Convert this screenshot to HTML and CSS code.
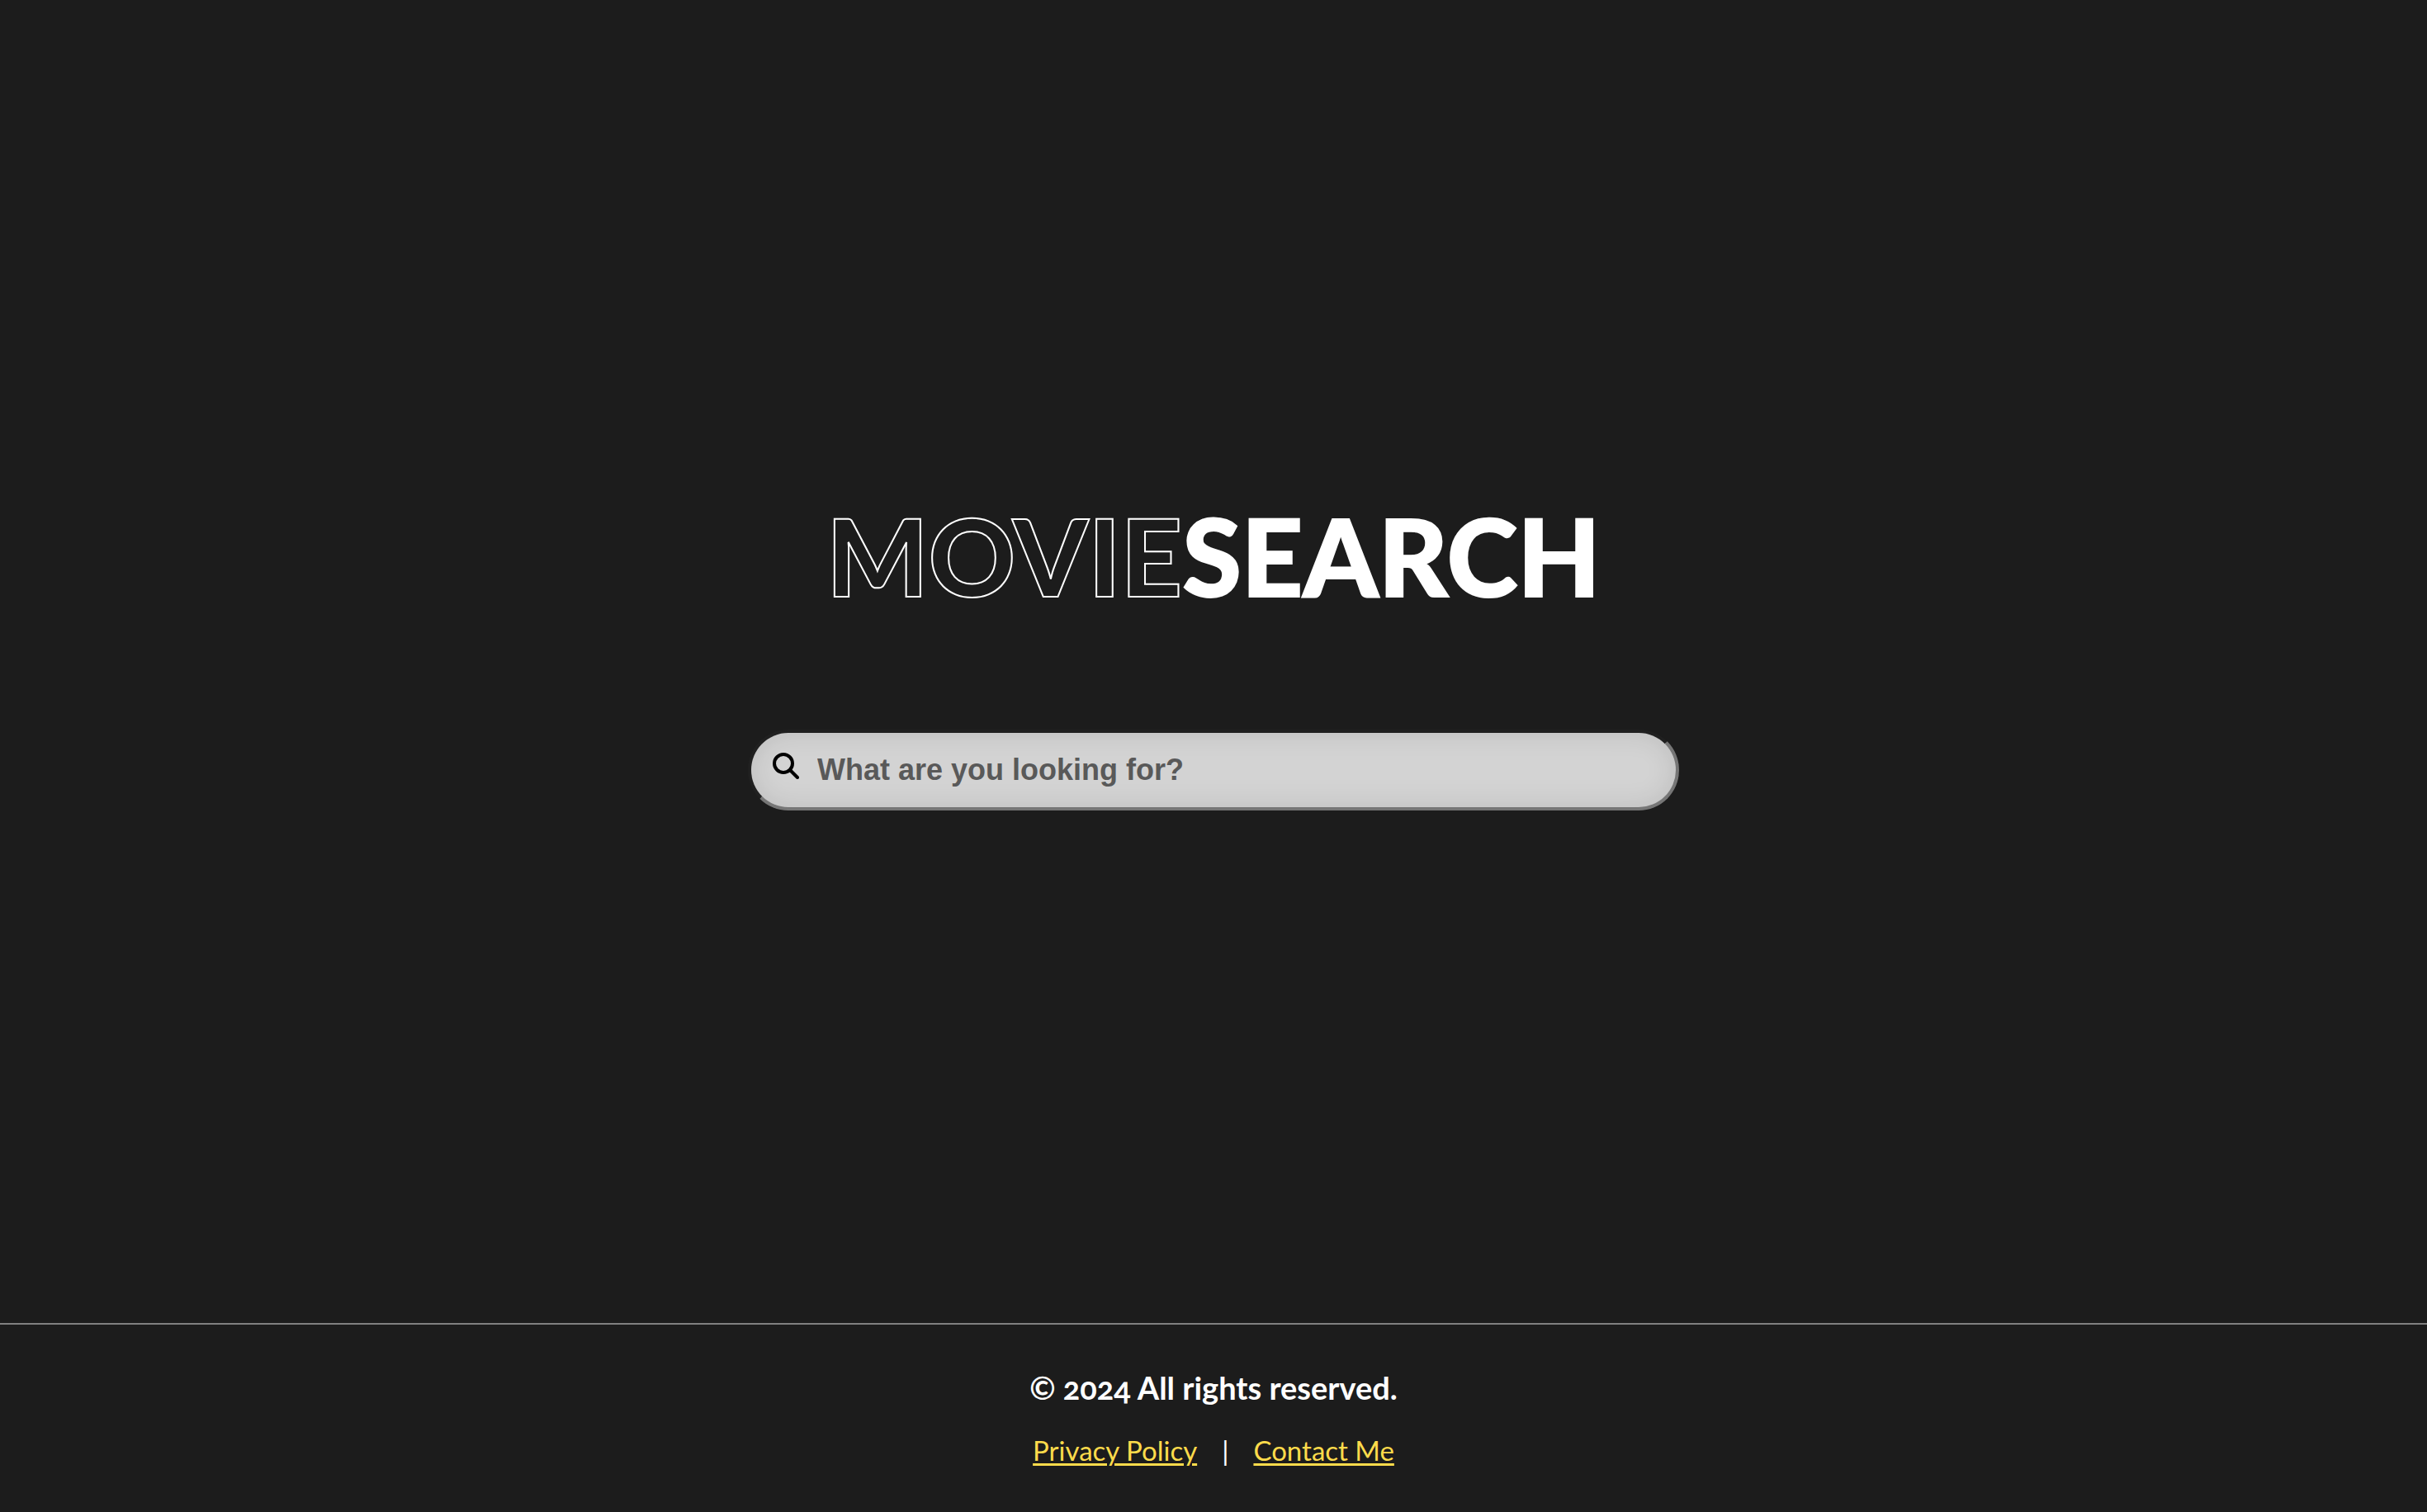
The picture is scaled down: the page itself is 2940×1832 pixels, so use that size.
FILE: index.html
```html
<!DOCTYPE html>
<html lang="en">
<head>
  <meta charset="utf-8">
  <meta name="viewport" content="width=device-width, initial-scale=1">
  <title>MovieSearch</title>
  <link rel="stylesheet" href="styles.css">
</head>
<body>
  <main class="home">
    <h1 class="logo"><span class="logo-outline">MOVIE</span><span class="logo-solid">SEARCH</span></h1>
    <form class="search" role="search">
      <label class="search-label" for="query" aria-label="Search movies">
        <svg class="search-icon" viewBox="0 0 32 32" fill="none" stroke="currentColor" stroke-width="4" stroke-linecap="round" aria-hidden="true">
          <circle cx="13" cy="13" r="11"/>
          <path d="M21 21l9 9"/>
        </svg>
      </label>
      <input class="search-input" id="query" type="text" placeholder="What are you looking for?">
    </form>
  </main>
  <footer class="footer">
    <p class="copyright">© 2024 All rights reserved.</p>
    <nav class="links">
      <a href="#privacy">Privacy Policy</a>
      <span class="divider">|</span>
      <a href="#contact">Contact Me</a>
    </nav>
  </footer>
</body>
</html>
```
FILE: styles.css
```css
* {
  box-sizing: border-box;
}

body {
  display: flex;
  flex-direction: column;
  min-height: 100vh;
  margin: 0;
  background: #1c1c1c;
  color: #fff;
  font-family: Lato, sans-serif;
}

.home {
  display: flex;
  flex: 1;
  flex-direction: column;
  align-items: center;
  justify-content: center;
  gap: 160px;
  padding: 0 32px;
}

.logo {
  margin: 0;
  font-family: "Lato Black", Lato, sans-serif;
  font-size: 130px;
  font-weight: 900;
  line-height: 102px;
  white-space: nowrap;
}

.logo-outline {
  color: #1c1c1c;
  -webkit-text-stroke: 2px #fff;
}

.logo-solid {
  -webkit-text-stroke: 2px #fff;
}

.search {
  display: flex;
  align-items: center;
  width: 100%;
  max-width: 1128px;
  height: 98px;
  padding: 0 26px;
  border: 4px solid;
  border-color: #202020 #767676 #767676 #202020;
  border-radius: 50px;
  background: #d3d3d3;
  box-shadow: inset 0 0 32px rgba(0, 0, 0, 0.1);
  color: #000;
}

.search-label {
  display: flex;
  padding-bottom: 10px;
}

.search-icon {
  width: 32px;
  height: 32px;
}

.search-input {
  flex: 1;
  min-width: 0;
  padding: 0 22px;
  border: 0;
  outline: 0;
  background: transparent;
  color: #000;
  font: bold 36px "Liberation Sans", Arial, sans-serif;
}

.search-input::placeholder {
  color: #595959;
  opacity: 1;
}

.footer {
  display: flex;
  flex-direction: column;
  align-items: center;
  gap: 32px;
  padding: 54px 32px 53px;
  border-top: 2px solid #808080;
}

.copyright {
  margin: 0;
  font-size: 38px;
  font-weight: 700;
  line-height: 44px;
  font-variant-numeric: oldstyle-nums;
}

.links {
  display: flex;
  gap: 30px;
  font-size: 33px;
  line-height: 44px;
}

.links a {
  color: #fddb4b;
  text-decoration-thickness: 3px;
  text-underline-offset: 3px;
}
```
